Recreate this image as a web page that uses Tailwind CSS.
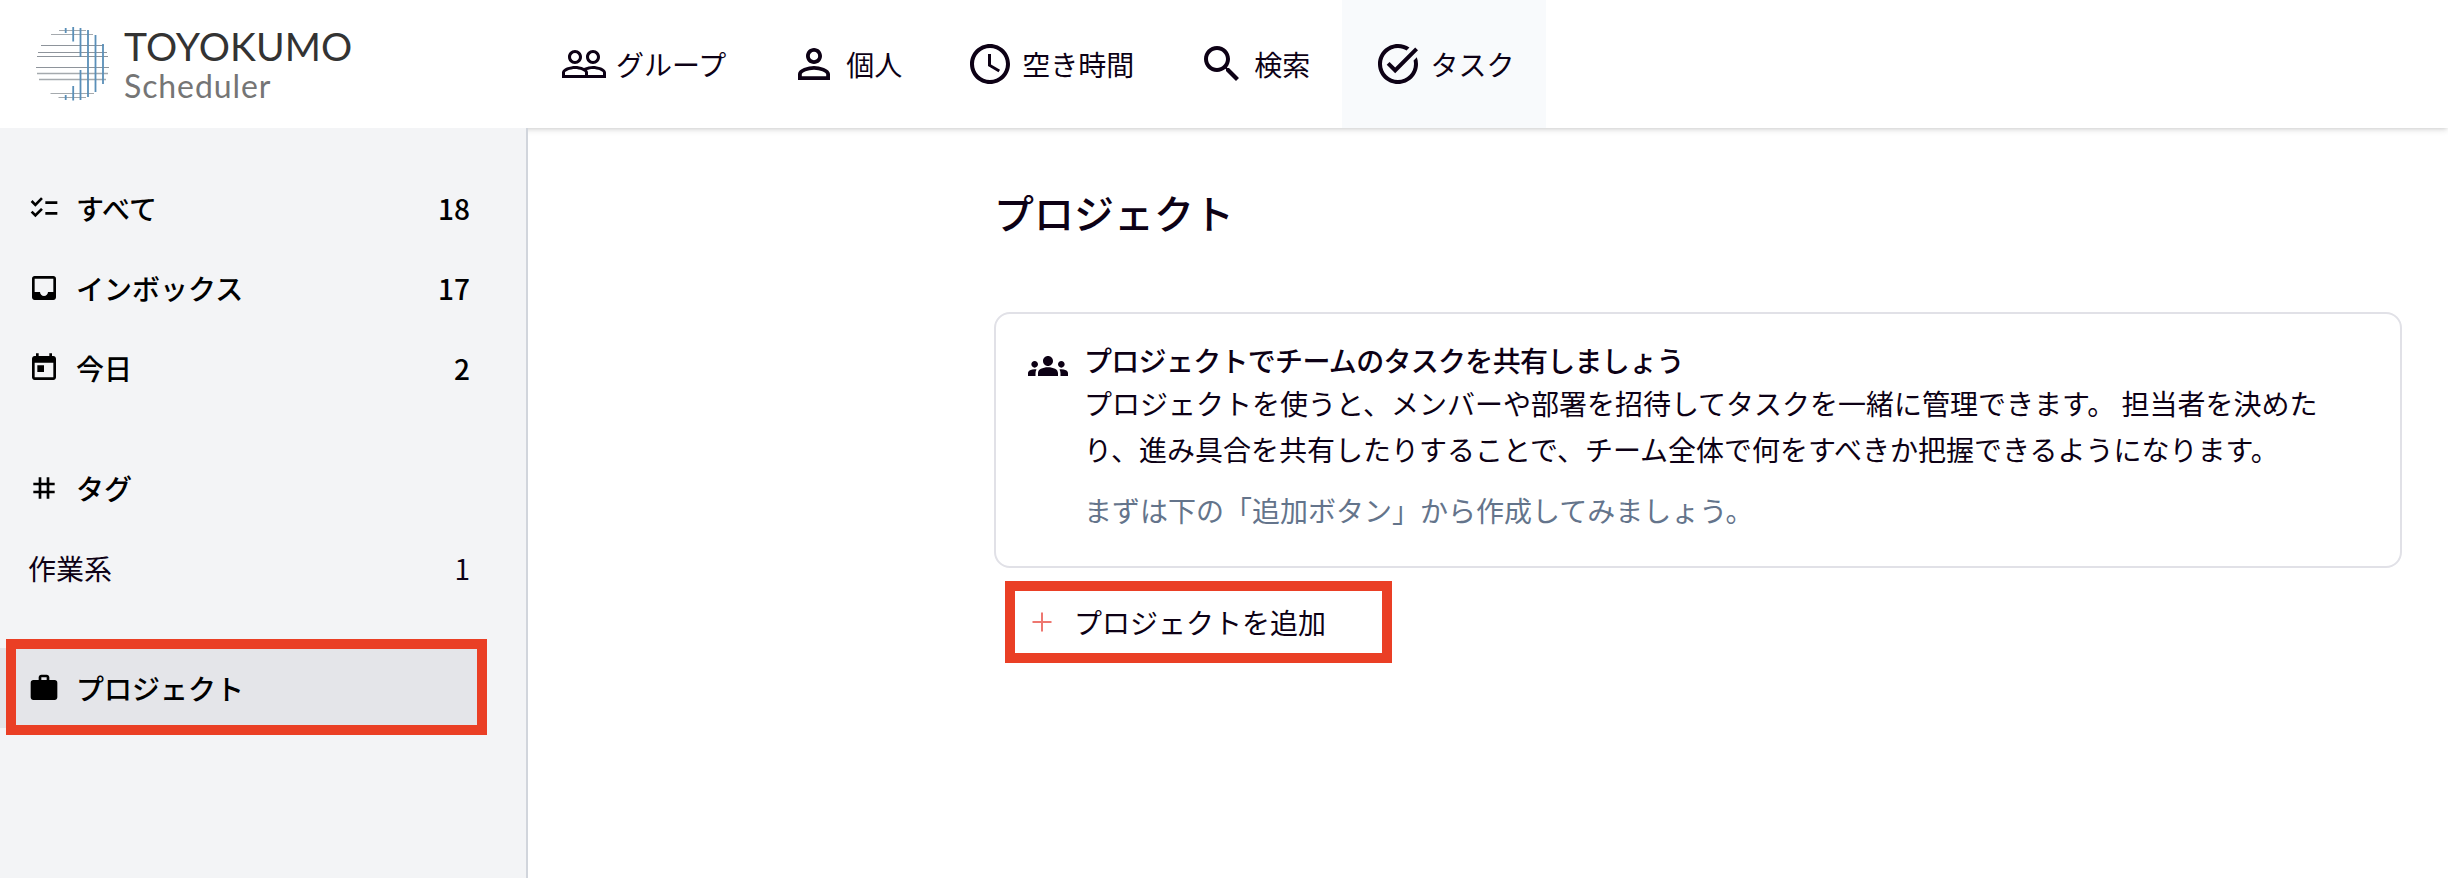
<!DOCTYPE html>
<html lang="ja">

<head>
    <meta charset="UTF-8">
    <meta name="viewport" content="width=device-width, initial-scale=1.0">
    <title>TOYOKUMO Scheduler</title>
    <script src="https://cdn.jsdelivr.net/npm/@tailwindcss/browser@4"></script>
</head>

<body class="h-[878px] overflow-hidden bg-white font-['Noto_Sans_CJK_JP',sans-serif] text-[28px] text-[#0d0115]">
    <div class="flex h-full flex-col">
        <header class="flex h-32 shrink-0 bg-white shadow-[0_2px_6px_rgba(0,0,0,0.12),0_2px_4px_-2px_rgba(0,0,0,0.12)]">
            <a href="#" class="flex w-[528px] items-start pl-9 pt-[27px]">
                <svg class="h-[74px] w-[73px] shrink-0" viewBox="36 27 73 74" fill="none">
                    <g stroke="#8e949b" stroke-width="1">
                        <path d="M59 30.5H86M51 34.5H93M50.5 93.5H94M58.5 97.5H86" stroke="#a5aaae" />
                        <path d="M41 45.5H104M38 52.5H107M37 56.5H108M36 67.5H109" />
                        <path d="M37 73.5H108M39 79.5H106" stroke="#a5aaae" stroke-width="1.5" />
                    </g>
                    <path stroke="#5a8fb8" stroke-width="1.8"
                        d="M65.7 28v5M65.7 95v5M73.2 27v14.5M73.2 86v14.5M80.5 28v29M80.5 70v30M88 30v67M95.5 35v57M103 44v40" />
                </svg>
                <div class="flex flex-col pl-[15px] font-['Lato',sans-serif]">
                    <span class="h-[38px] text-[39px] leading-[38px] tracking-[0.1px] text-[#333]">TOYOKUMO</span>
                    <span class="text-[32px] leading-[42px] tracking-[0.9px] text-[#757575]">Scheduler</span>
                </div>
            </a>
            <nav class="flex">
                <a href="#" class="flex items-center gap-2 px-8">
                    <svg class="size-12" viewBox="0 0 24 24" fill="currentColor">
                        <path d="M16.5 13c-1.2 0-3.07.34-4.5 1-1.43-.67-3.3-1-4.5-1C5.33 13 1 14.08 1 16.25V19h22v-2.75c0-2.17-4.33-3.25-6.5-3.25zm-4 4.5h-10v-1.25c0-.54 2.56-1.75 5-1.75s5 1.21 5 1.75v1.25zm9 0H14v-1.25c0-.46-.2-.86-.52-1.22.88-.3 1.96-.53 3.02-.53 2.44 0 5 1.21 5 1.75v1.25zM7.5 12c1.93 0 3.5-1.57 3.5-3.5S9.43 5 7.5 5 4 6.57 4 8.5 5.57 12 7.5 12zm0-5.5c1.1 0 2 .9 2 2s-.9 2-2 2-2-.9-2-2 .9-2 2-2zm9 5.5c1.93 0 3.5-1.57 3.5-3.5S18.43 5 16.5 5 13 6.57 13 8.5s1.57 3.5 3.5 3.5zm0-5.5c1.1 0 2 .9 2 2s-.9 2-2 2-2-.9-2-2 .9-2 2-2z" />
                    </svg>
                    <span>グループ</span>
                </a>
                <a href="#" class="flex items-center gap-2 px-8">
                    <svg class="size-12" viewBox="0 0 24 24" fill="currentColor">
                        <path d="M12 5.9c1.16 0 2.1.94 2.1 2.1s-.94 2.1-2.1 2.1S9.9 9.16 9.9 8s.94-2.1 2.1-2.1m0 9c2.97 0 6.1 1.46 6.1 2.1v1.1H5.9V17c0-.64 3.13-2.1 6.1-2.1M12 4C9.79 4 8 5.79 8 8s1.79 4 4 4 4-1.79 4-4-1.79-4-4-4zm0 9c-2.67 0-8 1.34-8 4v3h16v-3c0-2.66-5.33-4-8-4z" />
                    </svg>
                    <span>個人</span>
                </a>
                <a href="#" class="flex items-center gap-2 px-8">
                    <svg class="size-12" viewBox="0 0 24 24" fill="currentColor">
                        <path d="M11.99 2C6.47 2 2 6.48 2 12s4.47 10 9.99 10C17.52 22 22 17.52 22 12S17.52 2 11.99 2zM12 20c-4.42 0-8-3.58-8-8s3.58-8 8-8 8 3.58 8 8-3.58 8-8 8zm.5-13H11v6l5.25 3.15.75-1.23-4.5-2.67z" />
                    </svg>
                    <span>空き時間</span>
                </a>
                <a href="#" class="flex items-center gap-2 px-8">
                    <svg class="size-12" viewBox="0 0 24 24" fill="currentColor">
                        <path d="M15.5 14h-.79l-.28-.27C15.41 12.59 16 11.11 16 9.5 16 5.91 13.09 3 9.5 3S3 5.91 3 9.5 5.91 16 9.5 16c1.61 0 3.09-.59 4.23-1.57l.27.28v.79l5 4.99L20.49 19l-4.99-5zm-6 0C7.01 14 5 11.99 5 9.5S7.01 5 9.5 5 14 7.01 14 9.5 11.99 14 9.5 14z" />
                    </svg>
                    <span>検索</span>
                </a>
                <a href="#" class="flex items-center gap-2 bg-[#f8fafc] px-8">
                    <svg class="size-12" viewBox="0 0 24 24" fill="currentColor">
                        <path d="M22 5.18 10.59 16.6l-4.24-4.24 1.41-1.41 2.83 2.83 10-10L22 5.18zm-2.21 5.04c.13.57.21 1.17.21 1.78 0 4.42-3.58 8-8 8s-8-3.58-8-8 3.58-8 8-8c1.58 0 3.04.46 4.28 1.25l1.44-1.44C16.1 2.67 14.13 2 12 2 6.48 2 2 6.48 2 12s4.48 10 10 10 10-4.48 10-10c0-1.19-.22-2.33-.6-3.39l-1.61 1.61z" />
                    </svg>
                    <span>タスク</span>
                </a>
            </nav>
        </header>

        <div class="flex min-h-0 flex-1">
            <aside class="relative w-[528px] shrink-0 border-r-2 border-gray-300 bg-gray-100 pt-10">
                <ul class="w-[480px] font-medium text-black">
                    <li class="flex h-20 items-center gap-4 pl-7 pr-[10px]">
                        <svg class="size-8" viewBox="0 0 24 24" fill="currentColor">
                            <path d="M22 7h-9v2h9V7zm0 8h-9v2h9v-2zM5.54 11 2 7.46l1.41-1.41 2.12 2.12 4.24-4.24 1.41 1.41L5.54 11zm0 8L2 15.46l1.41-1.41 2.12 2.12 4.24-4.24 1.41 1.41L5.54 19z" />
                        </svg>
                        <span class="flex-1">すべて</span>
                        <span>18</span>
                    </li>
                    <li class="flex h-20 items-center gap-4 pl-7 pr-[10px]">
                        <svg class="size-8" viewBox="0 0 24 24" fill="currentColor">
                            <path d="M19 3H4.99c-1.11 0-1.98.89-1.98 2L3 19c0 1.1.88 2 1.99 2H19c1.1 0 2-.9 2-2V5c0-1.11-.9-2-2-2zm0 12h-4c0 1.66-1.35 3-3 3s-3-1.34-3-3H4.99V5H19v10z" />
                        </svg>
                        <span class="flex-1">インボックス</span>
                        <span>17</span>
                    </li>
                    <li class="flex h-20 items-center gap-4 pl-7 pr-[10px]">
                        <svg class="size-8" viewBox="0 0 24 24" fill="currentColor">
                            <path d="M19 3h-1V1h-2v2H8V1H6v2H5c-1.11 0-1.99.9-1.99 2L3 19c0 1.1.89 2 2 2h14c1.1 0 2-.9 2-2V5c0-1.1-.9-2-2-2zm0 16H5V8h14v11zM7 10h5v5H7z" />
                        </svg>
                        <span class="flex-1">今日</span>
                        <span>2</span>
                    </li>
                    <li class="mt-10 flex h-20 items-center gap-4 pl-7">
                        <svg class="size-8" viewBox="0 0 24 24" fill="currentColor">
                            <path d="M20 10V8h-4V4h-2v4h-4V4H8v4H4v2h4v4H4v2h4v4h2v-4h4v4h2v-4h4v-2h-4v-4h4zm-6 4h-4v-4h4v4z" />
                        </svg>
                        <span>タグ</span>
                    </li>
                    <li class="flex h-20 items-center justify-between pl-7 pr-[10px] font-normal text-[#0d0115]">
                        <span>作業系</span>
                        <span>1</span>
                    </li>
                    <li class="relative mt-10 flex h-20 items-center gap-4 bg-[#e4e5e9] pl-7">
                        <svg class="size-8" viewBox="0 0 24 24" fill="currentColor">
                            <path d="M20 6h-4V4c0-1.11-.89-2-2-2h-4c-1.11 0-2 .89-2 2v2H4c-1.11 0-1.99.89-1.99 2L2 19c0 1.11.89 2 2 2h16c1.11 0 2-.89 2-2V8c0-1.11-.89-2-2-2zm-6 0h-4V4h4v2z" />
                        </svg>
                        <span>プロジェクト</span>
                        <div class="absolute -top-[9px] left-[6px] h-24 w-[481px] border-10 border-[#ea3f25]"></div>
                    </li>
                </ul>
            </aside>

            <main class="flex-1 pl-[466px] pr-[46px] pt-[54px]">
                <h1 class="text-[40px] leading-[60px] font-medium">プロジェクト</h1>
                <section class="mt-[70px] flex h-64 gap-4 rounded-2xl border-2 border-[#e1e1e7] pl-8 pr-14 pt-[25px]">
                    <svg class="mt-[7px] size-10 shrink-0" viewBox="0 0 24 24" fill="currentColor">
                        <path d="M12 12.75c1.63 0 3.07.39 4.24.9 1.08.48 1.76 1.56 1.76 2.73V18H6v-1.61c0-1.18.68-2.26 1.76-2.73 1.17-.52 2.61-.91 4.24-.91zM4 13c1.1 0 2-.9 2-2s-.9-2-2-2-2 .9-2 2 .9 2 2 2zm1.13 1.1c-.37-.06-.74-.1-1.13-.1-.99 0-1.93.21-2.78.58C.48 14.9 0 15.62 0 16.43V18h4.5v-1.61c0-.83.23-1.61.63-2.29zM20 13c1.1 0 2-.9 2-2s-.9-2-2-2-2 .9-2 2 .9 2 2 2zm4 3.43c0-.81-.48-1.53-1.22-1.85-.85-.37-1.79-.58-2.78-.58-.39 0-.76.04-1.13.1.4.68.63 1.46.63 2.29V18H24v-1.57zM12 6c1.66 0 3 1.34 3 3s-1.34 3-3 3-3-1.34-3-3 1.34-3 3-3z" />
                    </svg>
                    <div>
                        <h2 class="leading-[42px] font-medium tracking-tight">プロジェクトでチームのタスクを共有しましょう</h2>
                        <p class="leading-[45.5px]">プロジェクトを使うと、メンバーや部署を招待してタスクを一緒に管理できます。 担当者を決めた<br>り、進み具合を共有したりすることで、チーム全体で何をすべきか把握できるようになります。</p>
                        <p class="mt-4 leading-[45.5px] text-[#64748b]">まずは下の「追加ボタン」から作成してみましょう。</p>
                    </div>
                </section>
                <button class="ml-[11px] mt-[13px] flex h-[82px] w-[387px] items-center gap-[22px] border-10 border-[#ea3f25] pl-[17px]">
                    <svg class="size-5" viewBox="0 0 20 20" fill="none" stroke="#ee7770" stroke-width="2">
                        <path d="M10 .5v19M.5 10h19" />
                    </svg>
                    <span>プロジェクトを追加</span>
                </button>
            </main>
        </div>
    </div>
</body>

</html>
